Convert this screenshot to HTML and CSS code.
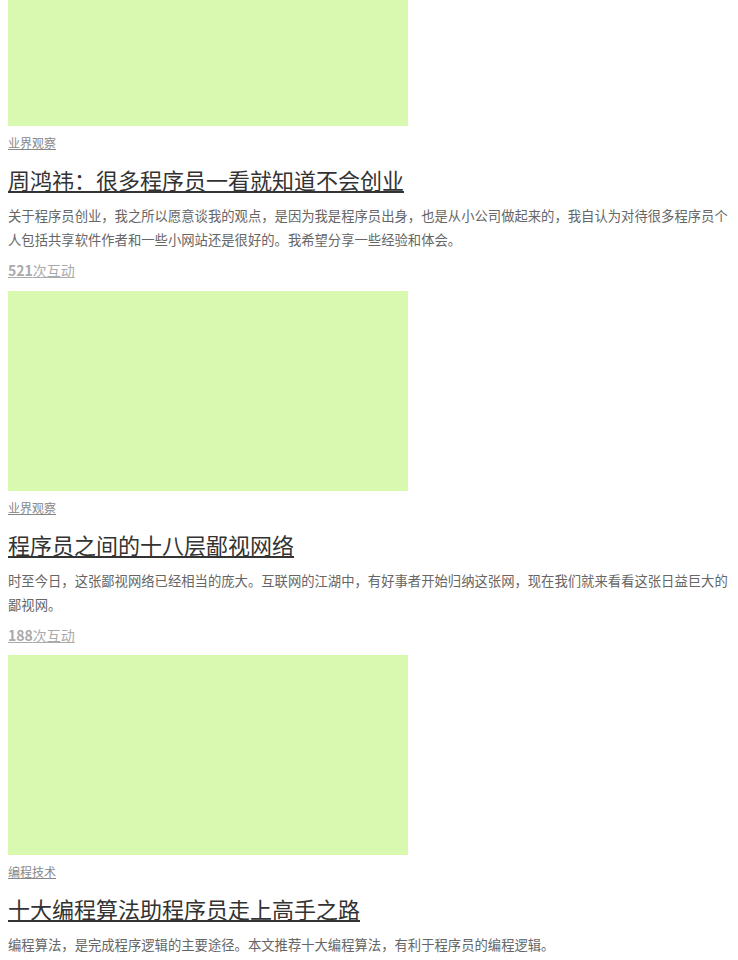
FILE: index.html
```html
<!DOCTYPE html>
<html lang="zh-CN">
<head>
<meta charset="utf-8">
<title>文章列表</title>
<link rel="stylesheet" href="styles.css">
</head>
<body>
<div class="list">
  <div class="article">
    <div class="thumb thumb-cut"></div>
    <div class="cat"><a href="#">业界观察</a></div>
    <h2 class="title"><a href="#">周鸿祎：很多程序员一看就知道不会创业</a></h2>
    <p class="desc">关于程序员创业，我之所以愿意谈我的观点，是因为我是程序员出身，也是从小公司做起来的，我自认为对待很多程序员个人包括共享软件作者和一些小网站还是很好的。我希望分享一些经验和体会。</p>
    <div class="count"><a href="#"><b>521</b>次互动</a></div>
  </div>
  <div class="article">
    <div class="thumb"></div>
    <div class="cat"><a href="#">业界观察</a></div>
    <h2 class="title"><a href="#">程序员之间的十八层鄙视网络</a></h2>
    <p class="desc">时至今日，这张鄙视网络已经相当的庞大。互联网的江湖中，有好事者开始归纳这张网，现在我们就来看看这张日益巨大的鄙视网。</p>
    <div class="count"><a href="#"><b>188</b>次互动</a></div>
  </div>
  <div class="article">
    <div class="thumb"></div>
    <div class="cat"><a href="#">编程技术</a></div>
    <h2 class="title"><a href="#">十大编程算法助程序员走上高手之路</a></h2>
    <p class="desc">编程算法，是完成程序逻辑的主要途径。本文推荐十大编程算法，有利于程序员的编程逻辑。</p>
    <div class="count"><a href="#"><b>256</b>次互动</a></div>
  </div>
</div>
</body>
</html>
```
FILE: styles.css
```css
html, body {
  background: #fff;
}
body {
  margin: 0 8px 8px;
  font-family: "Noto Sans CJK SC", "Noto Sans", sans-serif;
  color: #666;
}
.article {
  padding-bottom: 8.5px;
}
.thumb {
  width: 400px;
  height: 200px;
  background: #d9f8b0;
}
.thumb-cut {
  height: 126px;
}
.cat {
  margin-top: 7px;
  font-size: 12px;
  line-height: 20px;
}
.cat a {
  color: #888;
}
.title {
  margin: 11px 0 0;
  font-size: 22px;
  font-weight: normal;
  line-height: 30px;
}
.title a {
  color: #333;
}
.desc {
  margin: 10px 0 0;
  font-size: 13.33px;
  line-height: 24px;
  color: #666;
}
.count {
  margin-top: 6px;
  font-size: 14px;
  line-height: 24px;
}
.count a {
  color: #aaa;
}
.count b {
  font-weight: bold;
}
```
